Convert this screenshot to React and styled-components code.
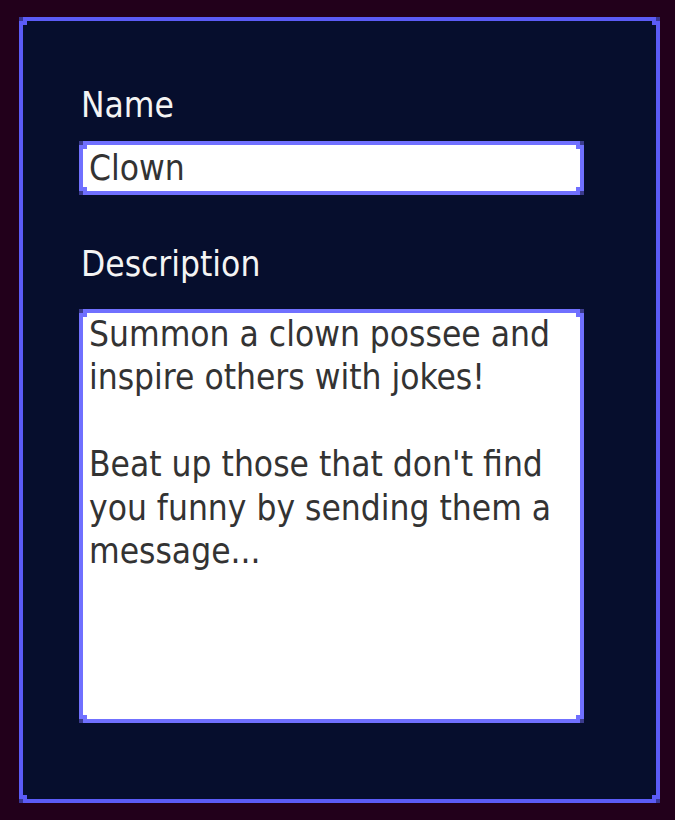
import React, { useState } from 'react';
import styled, { createGlobalStyle, css } from 'styled-components';

const Global = createGlobalStyle`
    html, body {
        margin: 0;
        padding: 0;
        background: #22001b;
    }
    body {
        font-family: "DejaVu Sans Condensed", "DejaVu Sans", sans-serif;
    }
`;

// pixel border: darker outer corner squares, filled inner corner squares
const pixelCorners = (edge, dark) => css`
    position: relative;
    border: 4px solid ${edge};
    &::after {
        content: '';
        position: absolute;
        inset: -4px;
        pointer-events: none;
        background:
            linear-gradient(${dark}, ${dark}) 0 0 / 4px 4px no-repeat,
            linear-gradient(${dark}, ${dark}) 100% 0 / 4px 4px no-repeat,
            linear-gradient(${dark}, ${dark}) 0 100% / 4px 4px no-repeat,
            linear-gradient(${dark}, ${dark}) 100% 100% / 4px 4px no-repeat,
            linear-gradient(${edge}, ${edge}) 4px 4px / 4px 4px no-repeat,
            linear-gradient(${edge}, ${edge}) calc(100% - 4px) 4px / 4px 4px no-repeat,
            linear-gradient(${edge}, ${edge}) 4px calc(100% - 4px) / 4px 4px no-repeat,
            linear-gradient(${edge}, ${edge}) calc(100% - 4px) calc(100% - 4px) / 4px 4px no-repeat;
    }
`;

const Panel = styled.form`
    ${pixelCorners('#5b5bf6', '#363694')}
    box-sizing: border-box;
    width: 641px;
    height: 786px;
    margin: 17px 0 0 19px;
    padding: 67px 0 0 56px;
    background: #060e2d;
    display: flex;
    flex-direction: column;
`;

const Label = styled.label`
    display: block;
    font-size: 35px;
    line-height: 35px;
    font-stretch: condensed;
    color: #f4f4f4;
    padding-left: 2px;
    margin-top: ${(p) => p.$gap}px;
`;

const Box = styled.div`
    ${pixelCorners('#7070ff', '#3b3b8e')}
    box-sizing: border-box;
    width: 505px;
    height: ${(p) => p.$h}px;
    margin-top: ${(p) => p.$gap}px;
    background: #ffffff;
`;

const fieldText = css`
    box-sizing: border-box;
    display: block;
    width: 100%;
    height: 100%;
    margin: 0;
    border: 0;
    outline: none;
    background: transparent;
    font-family: "DejaVu Sans Condensed", "DejaVu Sans", sans-serif;
    font-stretch: condensed;
    font-size: 35px;
    color: #333333;
    padding: 0 0 0 6px;
`;

const TextInput = styled.input`
    ${fieldText}
`;

const TextArea = styled.textarea`
    ${fieldText}
    line-height: 43.4px;
    resize: none;
    overflow: hidden;
    white-space: pre;
`;

export default function App() {
    const [name, setName] = useState('Clown');
    const [desc, setDesc] = useState(
        "Summon a clown possee and\ninspire others with jokes!\n\nBeat up those that don't find\nyou funny by sending them a\nmessage..."
    );

    return (
        <>
            <Global />
            <Panel onSubmit={(e) => e.preventDefault()}>
                <Label htmlFor="name" $gap={0}>Name</Label>
                <Box $h={54} $gap={18}>
                    <TextInput id="name" value={name} onChange={(e) => setName(e.target.value)} />
                </Box>
                <Label htmlFor="desc" $gap={52}>Description</Label>
                <Box $h={414} $gap={27}>
                    <TextArea id="desc" wrap="off" value={desc} onChange={(e) => setDesc(e.target.value)} />
                </Box>
            </Panel>
        </>
    );
}
